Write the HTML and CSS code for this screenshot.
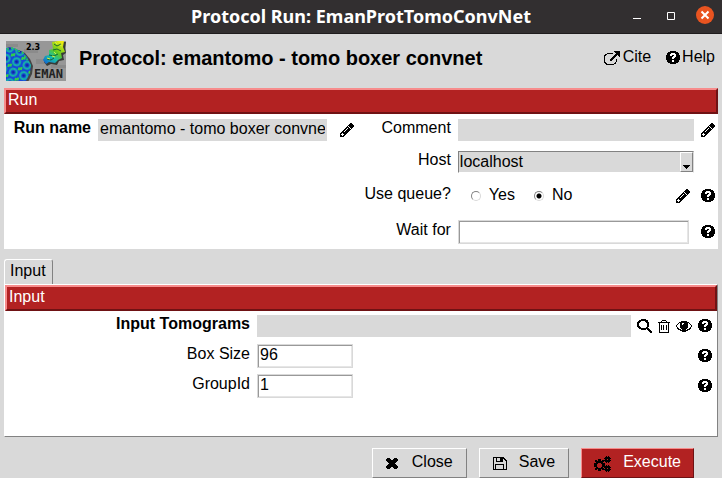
FILE: index.html
```html
<!DOCTYPE html>
<html lang="en">
<head>
<meta charset="utf-8">
<title>Protocol Run: EmanProtTomoConvNet</title>
<link rel="stylesheet" href="styles.css">
</head>
<body>
<svg class="defs" aria-hidden="true">
  <symbol id="help" viewBox="0 0 14 14">
    <path d="M4 0h6v1h2v1h1v2h1v5h-1v2h-1v1h-2v1H4v-1H2v-1H1V9H0V4h1V2h1V1h2z"/>
    <path fill="#fff" d="M5 2h4v1h1v3H9v1H8v1H6V6h1V5h1V4H6v1H4V3h1zM6 9h2v2H6z"/>
  </symbol>
  <symbol id="pencil" viewBox="0 0 14 14">
    <path d="M10 0h2v1h1v1h1v2h-1v1h-1v1h-1V5h-1V4H9V3H8V2h1V1h1zM7 3h1v1h1v1h1v1h1v1h-1v1H9v1H8v1H7v1H6v1H5v1H4v1H0v-4h1V9h1V8h1V7h1V6h1V5h1V4h1z"/>
    <path fill="#fff" d="M2 10h1v1h1v1H3v1H2v-1H1v-1h1zM7 5h1v1H7v1H6v1H5v1H4V8h1V7h1V6h1z"/>
  </symbol>
  <symbol id="cite" viewBox="0 0 17 14">
    <path d="M3 2h6v1H3v1H2v1H1v6h1v1h1v1h7v-1h1v-1h1V8h1v3h-1v2h-2v1H2v-1H1v-1H0V4h1V3h2z"/>
    <path d="M10 0h6v6h-1V5h-1V4h-1v1h-1v1h-1v1h-1v1H9v1H8v1H6V8h1V7h1V6h1V5h1V4h1V3h1V2h-1V1h-1z"/>
  </symbol>
  <symbol id="search" viewBox="0 0 15 14">
    <path fill-rule="evenodd" d="M4 0h5v1h2v2h1v5h-1v1h1v1h1v1h1v1h1v2h-2v-1h-1v-1h-1v-1h-1v-1H9v1H4v-1H2V9H1V8H0V3h1V2h1V1h2zM4 2v1H3v1H2v3h1v1h1v1h5V8h1V4H9V3H8V2z"/>
  </symbol>
  <symbol id="trash" viewBox="0 0 12 13">
    <path fill-rule="evenodd" d="M4 0h4v1h1v1h3v1h-1v10H1V3H0V2h3V1h1zM4 1v1h4V1zM2 3v9h8V3zM3 5h1v5H3zM5 5h1v5H5zM8 5h1v5H8z"/>
  </symbol>
  <symbol id="eye" viewBox="0 0 16 11">
    <path fill-rule="evenodd" d="M5 0h6v1h2v1h1v1h1v1h1v2h-1v2h-1v1h-2v1h-2v1H6v-1H4V9H2V8H1V6H0V4h1V3h1V2h1V1h2zM4 2H3v1H2v1H1v2h1v1h1v1h2v1h1V8H5V7H4zM12 2v5h-1v1h-1v1h1V8h2V7h1V6h1V4h-1V3h-1V2z"/>
    <path fill="#fff" d="M6 2h2v1H7v1H6z"/>
  </symbol>
  <symbol id="cross" viewBox="0 0 12 11">
    <path d="M1 0h3v1h1v1h2V1h1V0h3v1h1v2h-1v1h-1v1H9v1h1v1h1v1h1v2h-1v1H8v-1H7V9H5v1H4v1H1v-1H0V8h1V7h1V6h1V5H2V4H1V3H0V1h1z"/>
  </symbol>
  <symbol id="disk" viewBox="0 0 14 13">
    <path fill-rule="evenodd" d="M0 0h11v1h1v1h1v1h1v10H0zM1 1v11h1V7h9v5h2V4h-1V3h-1V2h-1v3H3V1zM4 1v3h3V1zM3 8v4h7V8z"/>
  </symbol>
  <symbol id="gears" viewBox="0 0 17 16">
    <path fill-rule="evenodd" d="M4 3h3v2h1V4h2v2H9v1h2v4H9v1h1v2H8v-1H7v2H4v-2H3v1H1v-2h1v-1H0V7h2V6H1V4h2v1h1zM4 7v1H3v3h1v1h3v-1h1V8H7V7z"/>
    <path fill-rule="evenodd" d="M12 0h1v1h1V0h1v1h1v1h1v1h-1v1h1v1h-1v1h-1v1h-1V6h-1v1h-1V6h-1V5h-1V4h1V3h-1V2h1V1h1zM13 3v1h1V3zM12 9h1v1h1V9h1v1h1v1h1v1h-1v1h1v1h-1v1h-1v1h-1v-1h-1v1h-1v-1h-1v-1h-1v-1h1v-1h-1v-1h1v-1h1zM13 12v1h1v-1z"/>
  </symbol>
</svg>

<header class="titlebar">
  <h1 class="window-title">Protocol Run: EmanProtTomoConvNet</h1>
  <div class="window-controls">
    <button type="button" aria-label="Minimize"><svg width="18" height="18"><path class="glyph" d="M5 12.500h8"/></svg></button>
    <button type="button" aria-label="Maximize"><svg width="18" height="18"><path class="glyph" d="M5.500 6.500h7v7h-7z"/></svg></button>
    <button type="button" aria-label="Close window" class="window-close"><svg width="18" height="18"><path class="glyph" d="M5.500 5.500l7 7m0-7l-7 7"/></svg></button>
  </div>
</header>

<div class="protocol-head">
  <svg class="logo" width="60" height="40" viewBox="0 0 60 40" role="img" aria-label="EMAN 2.3">
    <defs>
      <linearGradient id="mol" x1="0.800" y1="0" x2="0.100" y2="1">
        <stop offset="0" stop-color="#f2ee10"/><stop offset=".4" stop-color="#62c820"/>
        <stop offset=".65" stop-color="#18bea8"/><stop offset="1" stop-color="#1263d8"/>
      </linearGradient>
      <pattern id="shell" width="11" height="11" patternUnits="userSpaceOnUse" patternTransform="rotate(18)">
        <rect width="11" height="11" fill="#1748d8"/>
        <circle cx="5.500" cy="5.500" r="3.500" fill="none" stroke="#16b3a8" stroke-width="2"/>
        <circle cx="5.500" cy="5.500" r="1.300" fill="#10209c"/>
        <path d="M0 0h2v1H0zM9 0h2v2H9zM0 9h2v2H0zM9 10h2v1H9z" fill="#32cf4c"/>
      </pattern>
    </defs>
    <rect width="60" height="40" fill="#979797"/>
    <path d="M0 3h12v3H0zM18 8h14v4H18zM30 18h9v5h-9zM45 24h15v3H45z" fill="#8b8b8b"/>
    <path d="M0 8q5-2 10 0l7 3 5 6 3 7-1 8-4 8H0z" fill="#444" transform="translate(2 1)"/>
    <path d="M0 7q5-2 10 1l7 3 4 5 4 8-1 8-4 8H0z" fill="url(#shell)"/>
    <path d="M1 8l6-1 5 3 4 1 4 6 2 3" fill="none" stroke="#29c953" stroke-width="1.500" stroke-dasharray="2 2"/>
    <path d="M46 1l6-1h7l-1 6 1 5-3 2 1 5-5 1-2 4-6-1-4 2-3-4 2-5 3-1 1-5 4-1z" fill="#373c37" transform="translate(1 1)"/>
    <path d="M46 1l6-1h6l-1 6 2 5-4 1 1 5-4 2-3 3-6-1-3 2-3-4 2-4 4-1 0-5 4-1z" fill="url(#mol)"/>
    <path d="M48 3l3 2 4-2m-8 6l4-1 4 2m-12 4l5 1 4-2m-11 5l4 1 3-2" fill="none" stroke="#17682f" stroke-width="1"/>
    <path d="M49 1l2 2m3 1l2 1m-8 6l2 2m-9 4l3 1m2-3l3 1" fill="none" stroke="#d3f23c" stroke-width="1"/>
    <text x="20" y="9" class="logo-version">2.3</text>
    <text x="28" y="37" class="logo-name">EMAN</text>
  </svg>
  <h2 class="protocol-title">Protocol: emantomo - tomo boxer convnet</h2>
  <nav class="links">
    <a href="#cite"><svg width="17" height="14"><use href="#cite"/></svg>Cite</a>
    <a href="#help-page"><svg width="14" height="14"><use href="#help"/></svg>Help</a>
  </nav>
</div>

<main class="content">
  <section class="run">
    <h3 class="section-title">Run</h3>
    <div class="run-body">
      <div class="run-left">
        <div class="row">
          <label class="label strong" for="run-name">Run name</label>
          <input class="flat" id="run-name" type="text" value="emantomo - tomo boxer convnet">
          <div class="icons"><button type="button" aria-label="Edit run name"><svg width="14" height="14"><use href="#pencil"/></svg></button></div>
        </div>
      </div>
      <div class="run-right">
        <div class="row">
          <label class="label" for="comment">Comment</label>
          <input class="flat" id="comment" type="text">
          <div class="icons"><button type="button" aria-label="Edit comment"><svg width="14" height="14"><use href="#pencil"/></svg></button></div>
        </div>
        <div class="row">
          <label class="label" for="host">Host</label>
          <div class="combo">
            <select id="host"><option>localhost</option></select>
            <span class="combo-arrow"><svg width="7" height="4"><path d="M0 0h7v1H6v1H5v1H4v1H3V3H2V2H1V1H0z"/></svg></span>
          </div>
          <div class="icons"></div>
        </div>
        <div class="row tall" role="radiogroup" aria-labelledby="queue-label">
          <span class="label" id="queue-label">Use queue?</span>
          <div class="radios">
            <label><input type="radio" name="queue">Yes</label>
            <label><input type="radio" name="queue" checked>No</label>
          </div>
          <div class="icons">
            <button type="button" aria-label="Edit queue"><svg width="14" height="14"><use href="#pencil"/></svg></button>
            <button type="button" aria-label="Queue help"><svg width="14" height="14"><use href="#help"/></svg></button>
          </div>
        </div>
        <div class="row tall">
          <label class="label" for="wait">Wait for</label>
          <input class="entry wait" id="wait" type="text">
          <div class="icons"><button type="button" aria-label="Wait for help"><svg width="14" height="14"><use href="#help"/></svg></button></div>
        </div>
      </div>
    </div>
  </section>

  <section class="notebook">
    <div role="tablist"><button type="button" role="tab" aria-selected="true" class="tab">Input</button></div>
    <div class="page" role="tabpanel">
      <h3 class="section-title">Input</h3>
      <div class="params">
        <div class="row">
          <label class="label strong" for="tomograms">Input Tomograms</label>
          <input class="flat" id="tomograms" type="text">
          <div class="icons">
            <button type="button" aria-label="Search"><svg width="15" height="14"><use href="#search"/></svg></button>
            <button type="button" aria-label="Delete"><svg width="12" height="13"><use href="#trash"/></svg></button>
            <button type="button" aria-label="View"><svg width="16" height="11"><use href="#eye"/></svg></button>
            <button type="button" aria-label="Tomograms help"><svg width="14" height="14"><use href="#help"/></svg></button>
          </div>
        </div>
        <div class="row">
          <label class="label" for="box-size">Box Size</label>
          <input class="entry short" id="box-size" type="text" value="96">
          <div class="icons"><button type="button" aria-label="Box size help"><svg width="14" height="14"><use href="#help"/></svg></button></div>
        </div>
        <div class="row">
          <label class="label" for="group-id">GroupId</label>
          <input class="entry short" id="group-id" type="text" value="1">
          <div class="icons"><button type="button" aria-label="Group help"><svg width="14" height="14"><use href="#help"/></svg></button></div>
        </div>
      </div>
    </div>
  </section>
</main>

<footer class="actions">
  <button type="button" class="action"><svg width="14" height="11" viewBox="0 0 14 11"><use href="#cross" width="12" height="11"/></svg>Close</button>
  <button type="button" class="action"><svg width="14" height="13"><use href="#disk"/></svg>Save</button>
  <button type="button" class="action primary"><svg width="17" height="16"><use href="#gears"/></svg>Execute</button>
</footer>
</body>
</html>
```

FILE: styles.css
```css
* { box-sizing: border-box; }

body {
  margin: 0;
  min-height: 100vh;
  display: flex;
  flex-direction: column;
  background: #d9d9d9;
  color: #000;
  font: 16px/20px "Liberation Sans", Arial, sans-serif;
}

h1, h2, h3 { margin: 0; }
button, input, select { font: inherit; color: inherit; }
button { margin: 0; padding: 0; border: 0; background: none; }
svg { display: block; flex: none; shape-rendering: crispEdges; }
.defs { position: absolute; width: 0; height: 0; }

/* Window title bar */
.titlebar {
  height: 34px;
  display: grid;
  grid-template-columns: 1fr auto 1fr;
  align-items: center;
  background: #322f30;
  border-bottom: 1px solid #1f1c1d;
  color: #fff;
}
.window-title {
  grid-column: 2;
  padding-bottom: 2px;
  font: bold 18px/24px "Noto Sans", "Open Sans", sans-serif;
}
.window-controls {
  justify-self: end;
  display: flex;
  gap: 16px;
  padding: 0 8px 4px 0;
}
.window-controls svg { shape-rendering: auto; }
.glyph { fill: none; stroke: #fff; stroke-width: 1; }
.window-close { border-radius: 50%; background: #e95420; }
.window-close .glyph { stroke-width: 2; }

/* Protocol heading */
.protocol-head {
  height: 54px;
  display: flex;
  align-items: center;
  padding: 0 6px;
}
.logo { shape-rendering: auto; }
.logo-version { font: bold 8px "DejaVu Sans", sans-serif; }
.logo-name { font: bold 12px "DejaVu Sans Mono", monospace; fill: #222; }
.protocol-title {
  flex: 1;
  padding: 0 0 6px 13px;
  font-size: 20px;
  line-height: 24px;
}
.links { display: flex; gap: 15px; padding: 0 1px 8px 0; }
.links a {
  display: flex;
  gap: 2px;
  color: inherit;
  text-decoration: none;
}
.links svg { margin-top: 4px; }

/* Sections */
.content {
  flex: 1;
  display: flex;
  flex-direction: column;
  gap: 10px;
  padding: 0 4px;
}
.run { background: #fff; }
.section-title {
  height: 26px;
  padding: 0 2px;
  border: 2px solid;
  border-color: #f78c8c #6f1214 #6f1214 #f78c8c;
  background: #b22222;
  color: #fff;
  font-size: 16px;
  font-weight: normal;
  line-height: 20px;
}
.run-body { display: flex; padding: 5px 0 4px; }
.run-left { flex: 0 0 49%; }
.run-right {
  flex: 1;
  display: flex;
  flex-direction: column;
  gap: 10px;
}
.row { display: flex; align-items: center; min-height: 22px; }
.row.tall { min-height: 26px; }
.label {
  flex: none;
  padding-bottom: 4px;
  line-height: 18px;
  text-align: right;
  white-space: nowrap;
}
.strong { font-weight: bold; }
.run-left .label { width: 87px; }
.run-right .label { width: 97px; }
.row input[type="text"] { min-width: 0; margin-left: 7px; border-radius: 0; outline: 0; }
.flat {
  flex: 1;
  height: 22px;
  padding: 0 2px 3px;
  border: 0;
  background: #d9d9d9;
}
.entry {
  height: 24px;
  padding: 0 2px 3px;
  border: 1px solid #d9d9d9;
  background: #fff;
  box-shadow: inset 1px 1px #999, inset -1px -1px #e6e6e6;
}
.wait { flex: 1; }
.icons { flex: none; display: flex; justify-content: flex-end; align-items: center; }
.run-left .icons { width: 27px; }
.run-right .icons { width: 24px; padding-right: 3px; }
.run-right .tall .icons { width: 29px; gap: 11px; padding-right: 3px; }

.combo { position: relative; flex: 1; margin-left: 7px; }
.combo select {
  display: block;
  width: 100%;
  height: 22px;
  padding: 0 16px 4px 1px;
  border: 1px solid;
  border-color: #828282 #d9d9d9 #fff #828282;
  border-radius: 0;
  background: #d9d9d9;
  appearance: none;
}
.combo-arrow {
  position: absolute;
  top: 1px;
  right: 1px;
  bottom: 1px;
  width: 13px;
  display: flex;
  align-items: flex-end;
  justify-content: center;
  padding-bottom: 2px;
  border: 1px solid;
  border-color: #fff #828282 #828282 #fff;
  background: #d9d9d9;
  pointer-events: none;
}

.radios { flex: 1; display: flex; gap: 19px; padding-left: 20px; }
.radios label { display: flex; align-items: center; gap: 8px; padding-bottom: 3px; }
.radios input {
  width: 10px;
  height: 10px;
  margin: 3px 0 0;
  border: 1px solid;
  border-color: #828282 #d9d9d9 #d9d9d9 #828282;
  border-radius: 50%;
  background: #fff;
  appearance: none;
}
.radios input:checked { background: radial-gradient(circle, #000 2px, #fff 3px); }

/* Tabbed parameters */
.notebook { flex: 1; display: flex; flex-direction: column; }
.tab {
  display: block;
  height: 25px;
  padding: 0 6px 2px 5px;
  border: 1px solid;
  border-color: #fff #828282 transparent #fff;
  border-bottom: 0;
  border-radius: 3px 3px 0 0;
}
.page {
  flex: 1;
  border: 1px solid;
  border-color: #fff #828282 #828282 #fff;
  background: #fff;
}
.params .row { min-height: 30px; }
.params .label { width: 245px; }
.params .icons { margin-left: auto; gap: 6px; padding: 0 5px 0 6px; }
.short { width: 96px; }

/* Footer buttons */
.actions {
  display: flex;
  justify-content: flex-end;
  gap: 12px;
  padding: 11px 28px 0 0;
}
.action {
  height: 30px;
  display: flex;
  align-items: center;
  gap: 12px;
  padding: 0 13px 2px;
  border: 1px solid;
  border-color: #fff #828282 #828282 #fff;
}
.action svg { margin-top: 3px; }
.primary {
  padding: 0 12px 2px;
  border-color: #f78c8c #6f1214 #6f1214 #f78c8c;
  background: #b22222;
  color: #fff;
}
.primary svg { fill: #000; }
```
